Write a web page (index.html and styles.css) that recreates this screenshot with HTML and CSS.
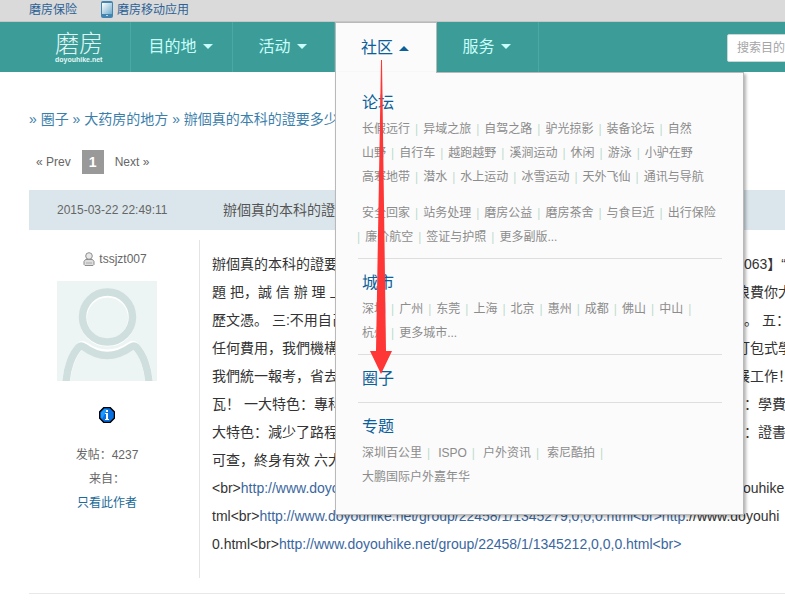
FILE: index.html
```html
<!DOCTYPE html>
<html lang="zh-CN">
<head>
<meta charset="utf-8">
<title>磨房</title>
<link rel="stylesheet" href="styles.css">
</head>
<body>
<div class="topbar">
  <a href="#">磨房保险</a>
  <a href="#" class="mobile">
    <svg width="12" height="17" viewBox="0 0 12 17" aria-hidden="true">
      <defs><linearGradient id="screen" x1="0" y1="0" x2="1" y2="1"><stop offset="0" stop-color="#fff"/><stop offset="1" stop-color="#6faccd"/></linearGradient></defs>
      <rect width="12" height="17" rx="2" fill="#4285b0"/>
      <rect x="1" y="2" width="10" height="11" fill="url(#screen)"/>
      <rect x="5" y="14" width="2" height="1" fill="#b5dbea"/>
    </svg>磨房移动应用</a>
</div>

<header class="header">
  <a href="#" class="logo"><span class="logo-name">磨房</span><span class="logo-site">doyouhike.net</span></a>
  <nav class="nav">
    <div class="nav-item"><a href="#" class="nav-link">目的地<i class="caret"></i></a></div>
    <div class="nav-item"><a href="#" class="nav-link">活动<i class="caret"></i></a></div>
    <div class="nav-item open">
      <a href="#" class="nav-link">社区<i class="caret up"></i></a>
      <div class="menu">
        <section class="group">
          <h2><a href="#">论坛</a></h2>
          <div class="row"><a href="#">长假远行</a><span>|</span><a href="#">异域之旅</a><span>|</span><a href="#">自驾之路</a><span>|</span><a href="#">驴光掠影</a><span>|</span><a href="#">装备论坛</a><span>|</span><a href="#">自然</a></div>
          <div class="row"><a href="#">山野</a><span>|</span><a href="#">自行车</a><span>|</span><a href="#">越跑越野</a><span>|</span><a href="#">溪涧运动</a><span>|</span><a href="#">休闲</a><span>|</span><a href="#">游泳</a><span>|</span><a href="#">小驴在野</a></div>
          <div class="row"><a href="#">高寒地带</a><span>|</span><a href="#">潜水</a><span>|</span><a href="#">水上运动</a><span>|</span><a href="#">冰雪运动</a><span>|</span><a href="#">天外飞仙</a><span>|</span><a href="#">通讯与导航</a></div>
          <div class="row spaced"><a href="#">安全回家</a><span>|</span><a href="#">站务处理</a><span>|</span><a href="#">磨房公益</a><span>|</span><a href="#">磨房茶舍</a><span>|</span><a href="#">与食巨近</a><span>|</span><a href="#">出行保险</a></div>
          <div class="row hanging"><span>|</span><a href="#">廉价航空</a><span>|</span><a href="#">签证与护照</a><span>|</span><a href="#">更多副版...</a></div>
        </section>
        <section class="group">
          <h2><a href="#">城市</a></h2>
          <div class="row"><a href="#">深圳</a><span>|</span><a href="#">广州</a><span>|</span><a href="#">东莞</a><span>|</span><a href="#">上海</a><span>|</span><a href="#">北京</a><span>|</span><a href="#">惠州</a><span>|</span><a href="#">成都</a><span>|</span><a href="#">佛山</a><span>|</span><a href="#">中山</a><span>|</span></div>
          <div class="row"><a href="#">杭州</a><span>|</span><a href="#">更多城市...</a></div>
        </section>
        <section class="group">
          <h2><a href="#">圈子</a></h2>
        </section>
        <section class="group topics">
          <h2><a href="#">专题</a></h2>
          <div class="row"><a href="#">深圳百公里</a><span>|</span><a href="#">ISPO</a><span>|</span><a href="#">户外资讯</a><span>|</span><a href="#">索尼酷拍</a><span>|</span></div>
          <div class="row"><a href="#">大鹏国际户外嘉年华</a></div>
        </section>
        <svg class="arrow" width="22" height="314" viewBox="0 0 22 314" aria-hidden="true"><path d="M11 0h1L16 291h6L11 314 0 291h6z" fill="#fe3636"/></svg>
      </div>
    </div>
    <div class="nav-item"><a href="#" class="nav-link">服务<i class="caret"></i></a></div>
  </nav>
  <form class="search"><input type="text" placeholder="搜索目的" aria-label="搜索"></form>
</header>

<main class="page">
  <div class="crumbs">» <a href="#">圈子</a> » <a href="#">大药房的地方</a> » <a href="#">辦個真的本科的證要多少</a></div>
  <div class="pager"><a href="#">« Prev</a><b>1</b><a href="#">Next »</a></div>
  <div class="post-bar"><time>2015-03-22 22:49:11</time><h1>辦個真的本科的證</h1></div>
  <article class="post">
    <aside class="author">
      <a href="#" class="user">
        <svg width="12" height="14" viewBox="0 0 12 14" aria-hidden="true"><path d="M2.500 7.500h7l1.500 2v3l-1 1H2l-1-1v-3z" fill="#ddd" stroke="#8d8d8d"/><circle cx="6" cy="4" r="3.300" fill="#e8e8e8" stroke="#8d8d8d"/><path d="M3 11h6" stroke="#aaa"/></svg>tssjzt007</a>
      <svg class="avatar" width="100" height="100" viewBox="0 0 100 100" role="img" aria-label="头像"><path fill="#edf4f4" d="M0 0h100v100H0z"/><g fill="none" stroke="#fff" stroke-width="8"><circle cx="50.500" cy="37" r="24.500"/><path d="M9 101C10 87 16 72 23 65q2-2 5 0 22 15 45 0 3-2 5 0c8 7 13 22 14 36"/></g><g fill="none" stroke="#cfdfdd" stroke-width="7.500"><circle cx="50.500" cy="36" r="25"/><path d="M9 101C10 87 15 73 22 66q2-2 5 0 23 17 47 0 3-2 5 0c7 7 12 21 13 35"/></g></svg>
      <svg class="info" width="16" height="16" viewBox="0 0 16 16" aria-hidden="true"><path d="M5 .5h6L15.500 5v6L11 15.500H5L.5 11V5z" fill="#0870e0" stroke="#000" stroke-width="1.500"/><path d="M5.500 2h3L3 12 2 10V5.500z" fill="#1b9bff"/><path d="M7 3h2v2H7zM6 6h3v6h1v1H6v-1h1V7H6z" fill="#fff"/></svg>
      <div>发帖：4237</div>
      <div>来自：</div>
      <a href="#" class="only">只看此作者</a>
    </aside>
    <div class="message">
      <div class="line"><span>辦個真的本科的證要</span><span class="tail near">063】“</span></div>
      <div class="line"><span>題 把，誠 信 辦 理 上</span><span class="tail">浪費你大</span></div>
      <div class="line"><span>歷文憑。 三:不用自己</span><span class="tail near">。 五：</span></div>
      <div class="line"><span>任何費用，我們機構</span><span class="tail">打包式學</span></div>
      <div class="line"><span>我們統一報考，省去</span><span class="tail">展工作！</span></div>
      <div class="line"><span>瓦！ 一大特色：專科</span><span class="tail near">：學費</span></div>
      <div class="line"><span>大特色：減少了路程</span><span class="tail near">：證書</span></div>
      <div class="line"><span>可查，終身有效 六大</span></div>
      <div class="line"><span>&lt;br&gt;<a href="#">http://www.doyou</a></span><span class="tail">youhike.</span></div>
      <div class="text">tml&lt;br&gt;<a href="#">http://www.doyouhike.net/group/22458/1/1345279,0,0,0.html&lt;br&gt;http</a>://www.doyouhi</div>
      <div class="text">0.html&lt;br&gt;<a href="#">http://www.doyouhike.net/group/22458/1/1345212,0,0,0.html&lt;br&gt;</a></div>
    </div>
  </article>
</main>
</body>
</html>
```
FILE: styles.css
```css
* { box-sizing: border-box; }

body {
  margin: 0;
  overflow: hidden;
  background: #fff;
  color: #666;
  font: 12px/24px "Liberation Sans", "Noto Sans CJK SC", sans-serif;
}

a { color: inherit; text-decoration: none; }

.topbar {
  display: flex;
  gap: 24px;
  height: 22px;
  padding-left: 29px;
  border-bottom: 1px solid #c6c6c6;
  background: #dadada;
  color: #2c6296;
  line-height: 20px;
}

.mobile { display: flex; gap: 4px; }
.mobile svg { margin-top: 1px; }

.header {
  display: flex;
  height: 50px;
  background: #3b9c98;
}

.logo {
  display: flex;
  flex: none;
  flex-direction: column;
  width: 131px;
  padding: 10px 0 0 55px;
  border-right: 1px solid #4ba8a4;
  color: #e2f7f5;
}

.logo-name { font-size: 24px; line-height: 24px; font-weight: 300; }
.logo-site { font-size: 7px; line-height: 8px; font-weight: bold; }

.nav { display: flex; flex: none; }

.nav-item {
  position: relative;
  width: 102px;
  border-right: 1px solid #4ba8a4;
}

.nav-link {
  display: flex;
  align-items: center;
  justify-content: center;
  gap: 6px;
  height: 50px;
  padding-right: 2px;
  color: #c9fffb;
  font-size: 16px;
}

.caret {
  margin-bottom: 2px;
  border: 5px solid transparent;
  border-top-color: #c9fffb;
  border-bottom: 0;
}

.caret.up {
  margin: 0;
  border-top: 0;
  border-bottom: 5px solid #0b6099;
}

.open {
  border: 1px solid #b9b9b9;
  border-bottom: 0;
  background: #fbfbfb;
}

.open .nav-link { color: #0b6099; }

.menu {
  position: absolute;
  z-index: 2;
  top: 49px;
  left: -1px;
  width: 409px;
  padding: 16px 21px 16px 22px;
  border: 1px solid #b9b9b9;
  background: #fbfbfb;
  box-shadow: 2px 2px 3px rgba(0, 0, 0, .3);
  color: #8c8c8c;
}

.menu::before {
  content: "";
  position: absolute;
  top: -1px;
  left: 0;
  width: 100px;
  height: 1px;
  background: #fbfbfb;
}

.group {
  padding: 0 4px 9px;
  border-bottom: 1px solid #dedede;
}

.group + .group { padding-top: 10px; }
.group:last-of-type { border-bottom: 0; }

.group h2 {
  margin: 0;
  color: #0b6099;
  font-size: 16px;
  font-weight: normal;
  line-height: 28px;
}

.row { display: flex; white-space: nowrap; }
.row span { padding: 0 5px; color: #bddccd; }
.topics .row span { padding-right: 8px; }
.spaced { margin-top: 12px; }
.hanging { margin-left: -10px; }

.arrow {
  position: absolute;
  top: -13px;
  left: 34px;
}

.search { flex: 1; padding: 12px 0 0 188px; }

.search input {
  width: 200px;
  height: 28px;
  padding: 0 9px;
  border: 1px solid #c7d8d7;
  border-radius: 2px;
  background: #fff;
  font: inherit;
}

.search input::placeholder { color: #a5a5a5; opacity: 1; }

.page { padding: 33px 0 0 29px; }

.crumbs {
  color: #3b80ab;
  font-size: 14px;
  line-height: 28px;
  white-space: nowrap;
}

.pager {
  display: flex;
  gap: 11px;
  margin-top: 17px;
  padding-left: 7px;
}

.pager b {
  width: 22px;
  background: #999;
  color: #fff;
  font-size: 14px;
  text-align: center;
}

.post-bar {
  display: flex;
  align-items: center;
  height: 40px;
  margin-top: 16px;
  padding-left: 28px;
  background: #dbe6ec;
}

.post-bar time { width: 166px; }

.post-bar h1 {
  margin: 0;
  color: #555;
  font-size: 14px;
  font-weight: normal;
}

.post {
  display: flex;
  padding: 10px 0 15px;
  border-bottom: 1px solid #e8e8e8;
}

.author {
  display: flex;
  flex: none;
  flex-direction: column;
  align-items: center;
  width: 171px;
  padding: 7px 14px 0 0;
  border-right: 1px solid #e4e4e4;
}

.user { display: flex; align-items: center; gap: 4px; padding-left: 16px; }
.avatar { margin-top: 10px; }
.info { margin: 26px 0 20px; }
.only { color: #1b6a99; }

.message {
  flex: 1;
  min-width: 0;
  padding: 10px 0 20px 12px;
  color: #333;
  font-size: 14px;
  line-height: 28px;
  white-space: nowrap;
}

.message a { color: #3a67a0; }

.line { display: grid; grid-template-columns: 524px 8px 1fr; height: 28px; }
.tail { grid-column: 2 / 4; }
.tail.near { grid-column: 3; }
```
